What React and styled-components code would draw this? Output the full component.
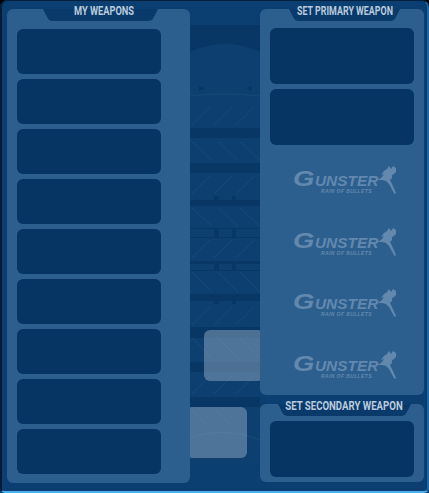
import React from 'react'
import styled, { createGlobalStyle } from 'styled-components'

const Global = createGlobalStyle`
  html, body {
    margin: 0;
    padding: 0;
    background: #000;
  }
`

const Frame = styled.div`
  position: relative;
  box-sizing: border-box;
  width: 429px;
  height: 493px;
  overflow: hidden;
  padding: 9px 5px 10px 7px;
  display: flex;
  justify-content: space-between;
  background: #0b3e71;
  border-radius: 7px 7px 0 0;
`

const Edge = styled.div`
  position: absolute;
  inset: 0;
  border-radius: 7px 7px 5px 5px;
  border-style: solid;
  border-color: #03203c #1c67a8 #4aaef0 #031c36;
  border-width: 1px 2px 2px 2px;
  pointer-events: none;
`

const Scenery = styled.svg`
  position: absolute;
  left: 0;
  top: 0;
`

const Ghost = styled.div`
  position: absolute;
  left: ${(p) => p.$x}px;
  top: ${(p) => p.$y}px;
  width: ${(p) => p.$w}px;
  height: 51px;
  border-radius: 6px;
  background: rgba(170, 190, 210, 0.42);
`

const Column = styled.div`
  position: relative;
  display: flex;
  flex-direction: column;
  justify-content: space-between;
  width: 164px;
  padding-bottom: 1px;
`

const Panel = styled.section`
  position: relative;
  box-sizing: border-box;
  width: ${(p) => p.$w || 164}px;
  height: ${(p) => p.$h}px;
  display: flex;
  flex-direction: column;
  gap: 5px;
  padding: ${(p) => p.$top}px 0 0 10px;
  background: #2d5f8e;
  border-radius: 6px;
`

const Tab = styled.div`
  position: absolute;
  top: 0;
  left: ${(p) => p.$left}px;
  width: ${(p) => p.$w}px;
  height: 12px;
  background: #0a3a6c;
  clip-path: polygon(
    0 0,
    100% 0,
    calc(100% - 4px) 8px,
    calc(100% - 6px) 11px,
    calc(100% - 9px) 12px,
    9px 12px,
    6px 11px,
    4px 8px
  );
`

const TabLabel = styled.h2`
  position: absolute;
  top: -5px;
  left: ${(p) => p.$center}px;
  margin: 0;
  transform: translateX(-50%) scaleX(${(p) => p.$squeeze});
  font-family: Roboto, "Liberation Sans", sans-serif;
  font-size: 12.5px;
  line-height: 14px;
  font-weight: 700;
  white-space: nowrap;
  color: #b9cbdc;
`

const Slot = styled.div`
  width: 144px;
  height: ${(p) => p.$h}px;
  flex: none;
  background: #063563;
  border-radius: 6px;
`

const Logos = styled.div`
  display: flex;
  flex-direction: column;
  gap: 29.6px;
  margin-top: 16px;
`

const Logo = styled.div`
  position: relative;
  width: 105px;
  height: 32px;
  margin-left: 23px;
  color: #6288ae;
`

const Wordmark = styled.span`
  position: absolute;
  left: 0;
  top: 2px;
  display: flex;
  align-items: baseline;
  font-family: "Liberation Sans", sans-serif;
  font-style: italic;
  font-weight: 700;
  line-height: 22px;
`

const Initial = styled.span`
  font-size: 22px;
  width: 22px;
  transform: scaleX(1.25);
  transform-origin: left;
`

const Rest = styled.span`
  font-size: 14px;
  transform: scaleX(1.1);
  transform-origin: left;
`

const Strap = styled.span`
  position: absolute;
  left: 28px;
  top: 22px;
  font-family: "Liberation Sans", sans-serif;
  font-style: italic;
  font-weight: 700;
  font-size: 5px;
  line-height: 6px;
  letter-spacing: 0.4px;
  white-space: nowrap;
`

const Runner = styled.svg`
  position: absolute;
  right: 0;
  top: 0;
`

const GunsterLogo = () => (
  <Logo>
    <Wordmark>
      <Initial>G</Initial>
      <Rest>UNSTER</Rest>
    </Wordmark>
    <Strap>RAIN OF BULLETS</Strap>
    <Runner width="20" height="28" viewBox="0 0 20 28" fill="currentColor">
      <path d="M9 3l2-3 2 3 2-3 3 2v4l-2 2-2 1v3l-2 2 2 4 4 9-1.500 1-5.500-10-3-3-4-1H0l4-3 2-3-3 1 3-4z" />
    </Runner>
  </Logo>
)

const Scene = () => (
  <Scenery width="429" height="493" viewBox="0 0 429 493" fill="none">
    <rect x="190" y="25" width="70" height="440" fill="#0d4070" />
    <path d="M190 25h70v27q-35-16-70 0z" fill="#083766" />
    <path d="M199 86l6 2.500-6 2.500zM252 86l-6 2.500 6 2.500z" fill="#083766" />
    <path d="M190 96q35-4 70 0" stroke="#1a4876" strokeWidth="1" />
    <rect x="190" y="128" width="70" height="10" fill="#083766" />
    <rect x="190" y="163" width="70" height="10" fill="#083766" />
    <rect x="190" y="200" width="70" height="6" fill="#083766" />
    <rect x="190" y="228" width="70" height="1" fill="#083766" />
    <rect x="190" y="237" width="70" height="1" fill="#083766" />
    <rect x="190" y="261" width="70" height="3" fill="#083766" />
    <rect x="190" y="270" width="70" height="1" fill="#083766" />
    <rect x="190" y="294" width="70" height="7" fill="#083766" />
    <rect x="190" y="327" width="70" height="11" fill="#083766" />
    <rect x="190" y="362" width="70" height="10" fill="#083766" />
    <rect x="190" y="397" width="70" height="10" fill="#083766" />
    <path d="M214 196h5v10h-5zM232 196h4v10h-4zM214 228h5v10h-5zM232 228h4v10h-4zM214 264h5v7h-5zM232 264h4v7h-4zM214 300h5v4h-5zM232 300h4v4h-4z" fill="#083766" />
    <path d="M192 125l18-18M214 125l18-18M236 125l18-18M192 142l20 18M218 142l20 18M240 142l20 18M192 194l18-18M214 194l18-18M236 194l18-18M192 208l20 18M218 208l20 18M240 208l20 18M192 258l18-18M214 258l18-18M236 258l18-18M192 272l20 20M218 272l20 20M240 272l20 20M192 325l18-18M214 325l18-18M236 325l18-18M192 338l20 20M218 338l20 20M240 338l20 20M192 394l18-18M214 394l18-18M236 394l18-18M192 410l14 14M216 410l14 14" stroke="#1a4876" strokeWidth="1" />
    <path d="M190 438q35-12 70 2" stroke="#164775" strokeWidth="1.500" />
  </Scenery>
)

const App = () => {
  const weapons = Array.from({ length: 9 })
  return (
    <>
      <Global />
      <Frame>
        <Scene />
        <Ghost $x={204} $y={330} $w={60} />
        <Ghost $x={186} $y={407} $w={61} />
        <Panel $w={183} $h={474} $top={20}>
          <Tab $left={36} $w={115} />
          <TabLabel $center={97} $squeeze={0.74}>MY WEAPONS</TabLabel>
          {weapons.map((_, i) => (
            <Slot key={i} $h={45} />
          ))}
        </Panel>
        <Column>
          <Panel $h={386} $top={19}>
            <Tab $left={29} $w={111} />
            <TabLabel $center={85} $squeeze={0.71}>SET PRIMARY WEAPON</TabLabel>
            <Slot $h={56} />
            <Slot $h={56} />
            <Logos>
              <GunsterLogo />
              <GunsterLogo />
              <GunsterLogo />
              <GunsterLogo />
            </Logos>
          </Panel>
          <Panel $h={78} $top={17}>
            <Tab $left={18} $w={133} />
            <TabLabel $center={84} $squeeze={0.77}>SET SECONDARY WEAPON</TabLabel>
            <Slot $h={56} />
          </Panel>
        </Column>
        <Edge />
      </Frame>
    </>
  )
}

export default App
